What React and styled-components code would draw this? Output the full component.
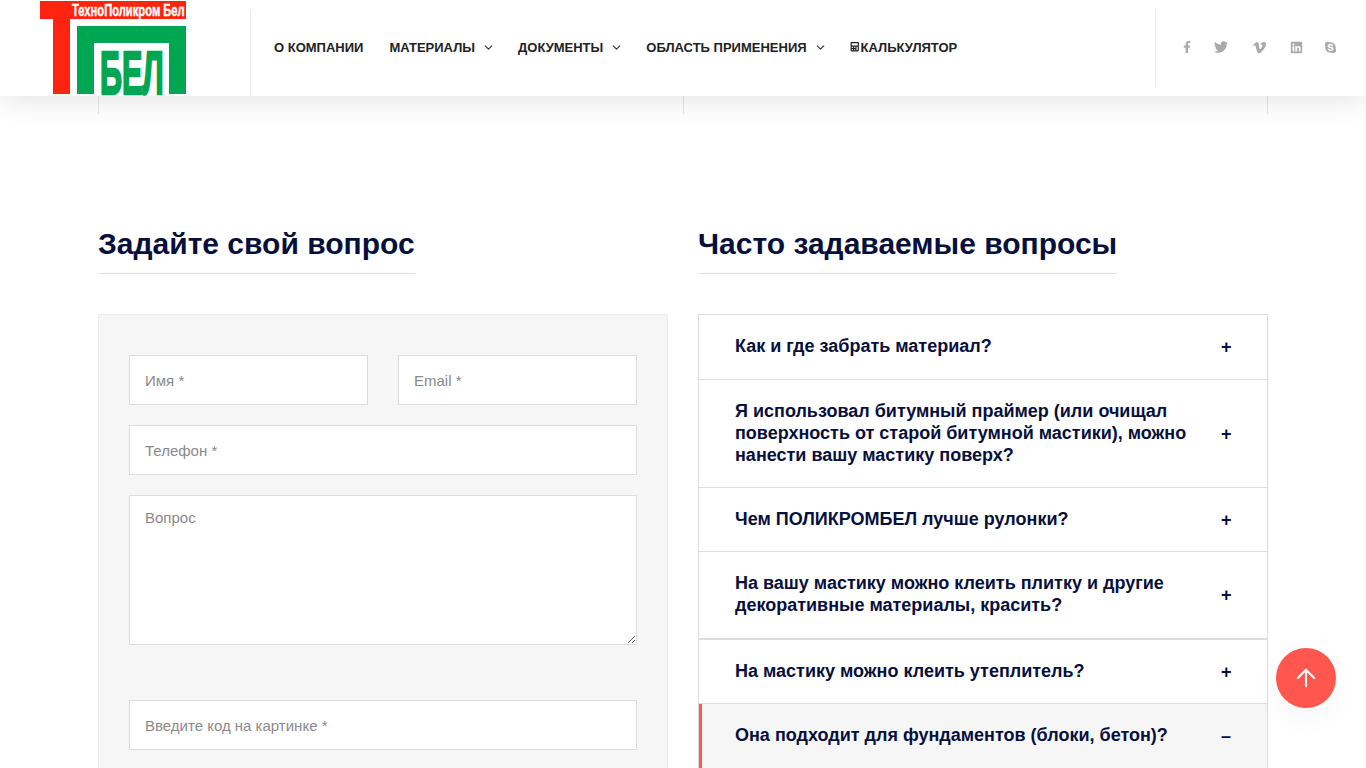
import React from 'react';
import styled, { createGlobalStyle } from 'styled-components';
import { FaCalculator, FaFacebookF, FaTwitter, FaVimeoV, FaLinkedin, FaSkype } from 'react-icons/fa';
import { FiArrowUp, FiChevronDown } from 'react-icons/fi';

const GlobalStyle = createGlobalStyle`
  html, body {
    margin: 0;
    padding: 0;
    height: 100%;
    overflow: hidden;
    background: #fff;
    font-family: 'Liberation Sans', Arial, sans-serif;
  }
  * { box-sizing: border-box; }
`;

const Page = styled.div`
  height: 768px;
  overflow: hidden;
  position: relative;
`;

const Header = styled.header`
  position: relative;
  z-index: 10;
  height: 96px;
  display: flex;
  align-items: stretch;
  background: #fff;
  box-shadow: 0 0 30px rgba(0, 0, 0, 0.14);
`;

const LogoBox = styled.div`
  width: 251px;
  height: 86px;
  border-right: 1px solid #eaeaea;
  margin-top: 10px;
  position: relative;
`;

const LogoSvg = styled.svg`
  position: absolute;
  left: 40px;
  top: -10px;
`;

const Nav = styled.nav`
  display: flex;
  align-items: center;
  padding: 0 0 2px 23px;
  flex: 1;
`;

const NavItem = styled.a`
  display: flex;
  align-items: center;
  margin-right: ${(p) => p.$gap}px;
  font-size: 13px;
  font-weight: 700;
  color: #222;
  white-space: nowrap;
  svg { flex: none; }
`;

const Caret = styled(FiChevronDown)`
  margin-left: 7px;
  font-size: 13px;
  color: #333;
`;

const CalcIcon = styled(FaCalculator)`
  font-size: 9.5px;
  margin-right: 1.5px;
`;

const Social = styled.div`
  width: 211px;
  height: 78px;
  margin-top: 9px;
  padding: 0 0 2px 14px;
  border-left: 1px solid #eaeaea;
  display: flex;
  align-items: center;
  color: #aaa;
`;

const SocialIcon = styled.span`
  display: flex;
  flex: none;
  width: ${(p) => p.$w}px;
  justify-content: center;
  font-size: ${(p) => p.$size || 12}px;
`;

const Strip = styled.div`
  height: 18px;
  margin: 0 98px;
  display: grid;
  grid-template-columns: 585px 1fr;
  border-right: 1px solid #e4e4e4;
`;

const StripCell = styled.div`
  border-left: 1px solid #e4e4e4;
`;

const Columns = styled.main`
  display: grid;
  grid-template-columns: 570px 570px;
  column-gap: 30px;
  margin: 0 98px;
  padding-top: 113px;
`;

const TitleWrap = styled.div`
  display: inline-block;
  border-bottom: 1px solid #e0e0e0;
  height: 47px;
  margin-bottom: 40px;
`;

const Title = styled.h2`
  margin: 0;
  font-size: 30px;
  line-height: 34px;
  font-weight: 700;
  color: #070f3c;
`;

const FormPanel = styled.form`
  background: #f6f6f6;
  border: 1px solid #eee;
  padding: 40px 30px;
  height: 600px;
`;

const Row = styled.div`
  display: flex;
  gap: 30px;
  margin-bottom: ${(p) => p.$mb ?? 20}px;
`;

const Input = styled.input`
  flex: 1;
  min-width: 0;
  height: 50px;
  padding: 0 15px;
  background: #fff;
  border: 1px solid #ddd;
  border-radius: 0;
  font-family: 'Liberation Sans', Arial, sans-serif;
  font-size: 15px;
  outline: none;
  &::placeholder { color: #8a8a8a; opacity: 1; }
`;

const Textarea = styled.textarea`
  flex: 1;
  height: 150px;
  padding: 13px 15px;
  background: #fff;
  border: 1px solid #ddd;
  border-radius: 0;
  font-family: 'Liberation Sans', Arial, sans-serif;
  font-size: 15px;
  outline: none;
  &::placeholder { color: #8a8a8a; opacity: 1; }
`;

const Accordion = styled.div`
  border: 1px solid #ddd;
  border-bottom: none;
  height: 600px;
`;

const Question = styled.div`
  display: flex;
  align-items: center;
  justify-content: space-between;
  height: ${(p) => p.$h}px;
  padding: 0 36px ${(p) => (p.$open ? 4 : 2)}px ${(p) => (p.$open ? 33 : 36)}px;
  background: ${(p) => (p.$open ? '#f6f6f6' : '#fff')};
  border-bottom: ${(p) => p.$bb || 1}px solid #ddd;
  border-left: ${(p) => (p.$open ? '3px solid #ff574d' : 'none')};
  font-size: 18px;
  line-height: 22px;
  font-weight: 700;
  color: #070f3c;
`;

const QuestionText = styled.span`
  width: 460px;
`;

const Sign = styled.span`
  width: 10px;
  text-align: center;
  font-size: 18px;
  line-height: 22px;
  margin-top: 2px;
`;

const ScrollTop = styled.button`
  position: absolute;
  left: 1276px;
  top: 648px;
  width: 60px;
  height: 60px;
  border: none;
  border-radius: 50%;
  background: #ff574d;
  color: #fff;
  display: flex;
  align-items: center;
  justify-content: center;
  font-size: 28px;
  padding: 0;
  box-shadow: 0 10px 30px rgba(0, 0, 0, 0.04);
  z-index: 20;
  svg { stroke-width: 1.8; }
`;

const questions = [
  { text: 'Как и где забрать материал?', h: 65 },
  { text: 'Я использовал битумный праймер (или очищал поверхность от старой битумной мастики), можно нанести вашу мастику поверх?', h: 108 },
  { text: 'Чем ПОЛИКРОМБЕЛ лучше рулонки?', h: 64 },
  { text: 'На вашу мастику можно клеить плитку и другие декоративные материалы, красить?', h: 88, bb: 2 },
  { text: 'На мастику можно клеить утеплитель?', h: 64 },
  { text: 'Она подходит для фундаментов (блоки, бетон)?', h: 66, open: true },
];

const Logo = () => (
  <LogoSvg width="146" height="114" viewBox="0 0 146 114">
    <rect x="0" y="1" width="146" height="18" fill="#ff2410" />
    <rect x="13" y="18" width="17" height="76" fill="#ff2410" />
    <text transform="translate(32 15.5) scale(0.7 1)" fill="#fff" stroke="#fff" strokeWidth="0.4" fontFamily="Liberation Sans" fontWeight="700" fontSize="16">ТехноПоликром Бел</text>
    <path d="M37 26h109v68h-17V43H54v51H37z" fill="#00a651" />
    <text transform="translate(60 94) scale(0.5 1)" fill="#00a651" stroke="#00a651" strokeWidth="2.5" fontFamily="Liberation Sans" fontWeight="700" fontSize="61">БЕЛ</text>
  </LogoSvg>
);

const App = () => (
  <Page>
    <GlobalStyle />
    <Header>
      <LogoBox>
        <Logo />
      </LogoBox>
      <Nav>
        <NavItem $gap={26}>О КОМПАНИИ</NavItem>
        <NavItem $gap={23}>МАТЕРИАЛЫ<Caret /></NavItem>
        <NavItem $gap={23}>ДОКУМЕНТЫ<Caret /></NavItem>
        <NavItem $gap={23}>ОБЛАСТЬ ПРИМЕНЕНИЯ<Caret /></NavItem>
        <NavItem $gap={0}><CalcIcon />КАЛЬКУЛЯТОР</NavItem>
      </Nav>
      <Social>
        <SocialIcon $w={34}><FaFacebookF /></SocialIcon>
        <SocialIcon $w={34} $size={14}><FaTwitter /></SocialIcon>
        <SocialIcon $w={42} $size={15}><FaVimeoV /></SocialIcon>
        <SocialIcon $w={32} $size={13}><FaLinkedin /></SocialIcon>
        <SocialIcon $w={36} $size={13}><FaSkype /></SocialIcon>
      </Social>
    </Header>
    <Strip>
      <StripCell />
      <StripCell />
    </Strip>
    <Columns>
      <div>
        <TitleWrap><Title>Задайте свой вопрос</Title></TitleWrap>
        <FormPanel>
          <Row>
            <Input placeholder="Имя *" />
            <Input placeholder="Email *" />
          </Row>
          <Row>
            <Input placeholder="Телефон *" />
          </Row>
          <Row $mb={55}>
            <Textarea placeholder="Вопрос" />
          </Row>
          <Row>
            <Input placeholder="Введите код на картинке *" />
          </Row>
        </FormPanel>
      </div>
      <div>
        <TitleWrap><Title>Часто задаваемые вопросы</Title></TitleWrap>
        <Accordion>
          {questions.map((q) => (
            <Question key={q.text} $h={q.h} $bb={q.bb} $open={q.open}>
              <QuestionText>{q.text}</QuestionText>
              <Sign>{q.open ? '–' : '+'}</Sign>
            </Question>
          ))}
        </Accordion>
      </div>
    </Columns>
    <ScrollTop aria-label="Наверх"><FiArrowUp /></ScrollTop>
  </Page>
);

export default App;
